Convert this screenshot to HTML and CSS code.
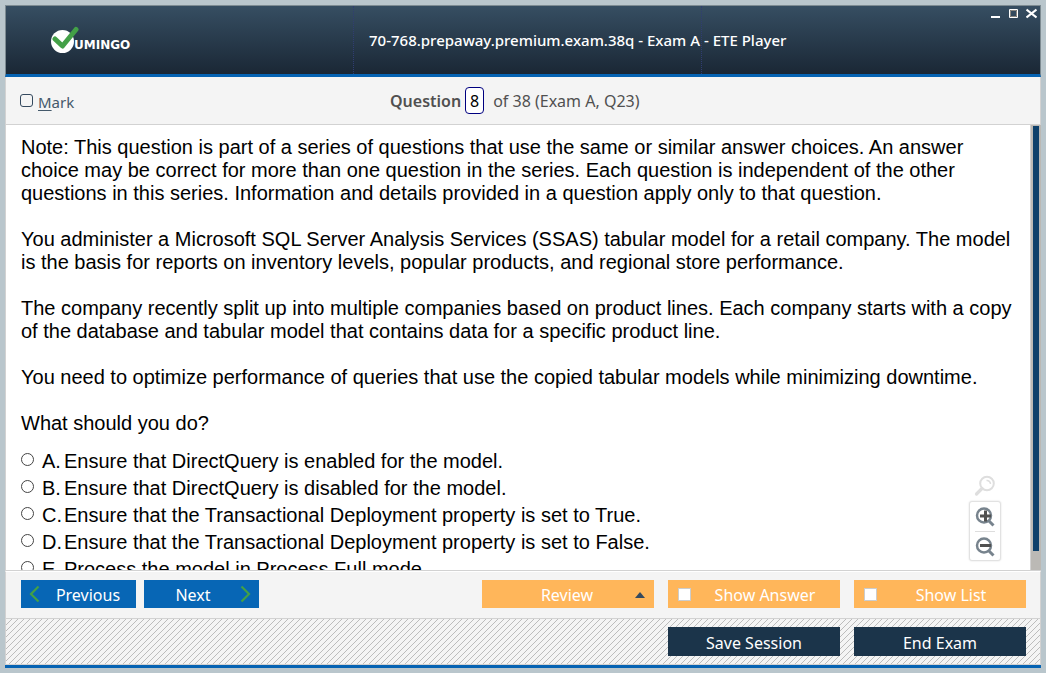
FILE: index.html
```html
<!DOCTYPE html>
<html lang="en">
<head>
<meta charset="utf-8">
<title>70-768.prepaway.premium.exam.38q - Exam A - ETE Player</title>
<link rel="stylesheet" href="styles.css">
</head>
<body>
<div class="window">
  <header class="titlebar">
    <div class="brand">
      <svg class="brand-mark" width="28" height="28" viewBox="0 0 28 28" aria-hidden="true">
        <circle cx="11.500" cy="15.500" r="11.500" fill="#fff"/>
        <path d="M4 13L11.500 20L25 3.500" fill="none" stroke="#43a047" stroke-width="5" stroke-linecap="round" stroke-linejoin="round"/>
      </svg>
      <span class="brand-name">UMINGO</span>
    </div>
    <h1 class="title">70-768.prepaway.premium.exam.38q - Exam A - ETE Player</h1>
    <div class="window-controls">
      <button type="button" class="control" aria-label="Minimize"><svg width="11" height="11" viewBox="0 0 11 11"><path d="M1 8h9v2H1z" fill="#fff"/></svg></button>
      <button type="button" class="control" aria-label="Maximize"><svg width="11" height="11" viewBox="0 0 11 11"><path d="M1.500 1.500h8v8h-8z" fill="none" stroke="#fff"/><path d="M2.500 2.500h6v6h-6z" fill="none" stroke="#8b8780"/></svg></button>
      <button type="button" class="control" aria-label="Close"><svg width="11" height="11" viewBox="0 0 11 11"><path d="M0.500 1.500L10.500 9.500M10.500 1.500L0.500 9.500" stroke="#fff" stroke-width="2.200"/></svg></button>
    </div>
  </header>

  <div class="infobar">
    <label class="mark"><input type="checkbox" class="mark-box"><span><u>M</u>ark</span></label>
    <div class="position">
      <label for="question-number" class="position-label">Question</label>
      <input id="question-number" class="position-input" type="text" value="8">
      <span>of 38 (Exam A, Q23)</span>
    </div>
  </div>

  <main class="content">
    <div class="question">
      <p>Note: This question is part of a series of questions that use the same or similar answer choices. An answer choice may be correct for more than one question in the series. Each question is independent of the other questions in this series. Information and details provided in a question apply only to that question.</p>
      <p>You administer a Microsoft SQL Server Analysis Services (SSAS) tabular model for a retail company. The model is the basis for reports on inventory levels, popular products, and regional store performance.</p>
      <p>The company recently split up into multiple companies based on product lines. Each company starts with a copy of the database and tabular model that contains data for a specific product line.</p>
      <p>You need to optimize performance of queries that use the copied tabular models while minimizing downtime.</p>
      <p>What should you do?</p>
      <div class="choices">
        <label class="choice"><input type="radio" name="answer"><span>A.</span><span>Ensure that DirectQuery is enabled for the model.</span></label>
        <label class="choice"><input type="radio" name="answer"><span>B.</span><span>Ensure that DirectQuery is disabled for the model.</span></label>
        <label class="choice"><input type="radio" name="answer"><span>C.</span><span>Ensure that the Transactional Deployment property is set to True.</span></label>
        <label class="choice"><input type="radio" name="answer"><span>D.</span><span>Ensure that the Transactional Deployment property is set to False.</span></label>
        <label class="choice"><input type="radio" name="answer"><span>E.</span><span>Process the model in Process Full mode.</span></label>
      </div>
    </div>
    <div class="scroll-track"><div class="scroll-thumb"></div></div>
    <div class="zoom">
      <svg width="22" height="22" viewBox="0 0 22 22" fill="none" stroke="#dedede" aria-hidden="true"><circle cx="13" cy="8.500" r="6.800" stroke-width="2"/><path d="M12.500 5.500a3.500 3.500 0 0 1 4 3.500" stroke-width="1.500"/><path d="M8 13.500L2.500 19" stroke-width="3.200" stroke-linecap="round"/></svg>
      <div class="zoom-panel">
        <button type="button" class="zoom-button" aria-label="Zoom in"><svg width="20" height="20" viewBox="0 0 20 20" fill="none"><circle cx="9" cy="8.500" r="7" stroke="#77838d" stroke-width="2.500"/><path d="M13.500 13.500L18.500 18.500" stroke="#77838d" stroke-width="3"/><path d="M5 9h11M10.500 3.500v11" stroke="#505050" stroke-width="3"/></svg></button>
        <button type="button" class="zoom-button" aria-label="Zoom out"><svg width="20" height="20" viewBox="0 0 20 20" fill="none"><circle cx="9" cy="8.500" r="7" stroke="#77838d" stroke-width="2.500"/><path d="M13.500 13.500L18.500 18.500" stroke="#77838d" stroke-width="3"/><path d="M5 8.500h11" stroke="#505050" stroke-width="3"/></svg></button>
      </div>
    </div>
  </main>

  <nav class="toolbar">
    <button type="button" class="button button-nav"><svg width="11" height="18" viewBox="0 0 11 18" fill="none" stroke="#43a047" stroke-width="2.200"><path d="M9.500 1.500L2 9l7.500 7.500"/></svg><span class="label-previous">Previous</span></button>
    <button type="button" class="button button-nav"><span class="label-next">Next</span><svg width="11" height="18" viewBox="0 0 11 18" fill="none" stroke="#43a047" stroke-width="2.200"><path d="M1.500 1.500L9 9l-7.500 7.500"/></svg></button>
    <div class="toolbar-options">
      <button type="button" class="button button-option"><span>Review</span><svg class="arrow" width="10" height="6" viewBox="0 0 10 6"><path d="M5 0l5 6H0z" fill="#34495e"/></svg></button>
      <label class="button button-option"><input type="checkbox" class="option-box"><span>Show Answer</span></label>
      <label class="button button-option"><input type="checkbox" class="option-box"><span>Show List</span></label>
    </div>
  </nav>

  <footer class="footer">
    <button type="button" class="button button-dark">Save Session</button>
    <button type="button" class="button button-dark">End Exam</button>
  </footer>
</div>
</body>
</html>
```
FILE: styles.css
```css
* {
  box-sizing: border-box;
}

body {
  margin: 0;
  height: 100vh;
  padding: 5px;
  background: #b9c6cc;
  color: #505050;
  font-family: "Noto Sans", "Open Sans", sans-serif;
  font-size: 16px;
}

button,
input {
  margin: 0;
  font: inherit;
}

.window {
  display: flex;
  flex-direction: column;
  height: 100%;
  border-bottom: 3px solid #0563b3;
  background: #f4f4f4;
}

.titlebar,
.infobar {
  display: grid;
  grid-template-columns: minmax(0, 348fr) minmax(0, 348fr) minmax(0, 338fr);
  flex: none;
}

.titlebar {
  height: 72px;
  border: 1px solid #7d8b92;
  border-bottom: 3px solid #0563b3;
  background: linear-gradient(#364e62, #1a2735);
}

.brand {
  display: flex;
  align-items: center;
  padding-left: 45px;
  border-right: 1px dotted #303d72;
}

.brand-name {
  margin-left: -5px;
  padding-top: 10px;
  color: #fff;
  font: bold 12px "DejaVu Sans", sans-serif;
}

.title {
  display: flex;
  align-items: center;
  margin: 0;
  padding-left: 15px;
  border-right: 1px dotted #303d72;
  color: #fff;
  font-size: 15px;
  font-weight: 500;
  white-space: nowrap;
}

.window-controls {
  display: flex;
  justify-content: flex-end;
  align-items: flex-start;
  gap: 7px;
  padding: 2px 3px;
}

.control {
  display: flex;
  padding: 0;
  border: 0;
  background: none;
}

.infobar {
  align-items: center;
  height: 48px;
  border: 1px solid #d2d2d2;
  border-top: 0;
}

.mark {
  display: flex;
  align-items: center;
  gap: 5px;
  padding-left: 14px;
  color: #44596b;
}

.mark span {
  padding-top: 2px;
  font-size: 15px;
}

.mark-box {
  appearance: none;
  width: 13px;
  height: 13px;
  border: 1px solid #34495e;
  border-radius: 3px;
}

.mark u {
  text-underline-offset: 2px;
}

.position {
  display: flex;
  align-items: center;
  padding-left: 36px;
  white-space: nowrap;
}

.position-label {
  font-weight: 600;
}

.position-input {
  width: 19px;
  height: 27px;
  margin: 0 9px 0 4px;
  padding: 0;
  border: 1px solid #000080;
  border-radius: 4px;
  background: #fff;
  color: #000;
  text-align: center;
}

.content {
  position: relative;
  display: flex;
  flex: 1;
  min-height: 0;
  border-bottom: 1px solid #d2d2d2;
  border-left: 1px solid #d2d2d2;
  background: #fff;
}

.question {
  flex: 1;
  overflow: hidden;
  padding: 11px 10px 0 15px;
  color: #000;
  font: 20px/23px "Liberation Sans", Arial, sans-serif;
}

.question p {
  margin: 0 0 23px;
}

.choices {
  margin-top: -10px;
}

.choice {
  display: grid;
  grid-template-columns: 21px 22px 1fr;
  align-items: center;
  height: 27px;
}

.choice input {
  appearance: none;
  width: 13px;
  height: 13px;
  margin-bottom: 4px;
  border: 1px solid #444;
  border-radius: 50%;
}

.scroll-track {
  width: 11px;
  padding: 1px 2px;
  border-left: 1px solid #d2d2d2;
  background: #bbb9b5;
}

.scroll-thumb {
  height: 96%;
  background: #0d406b;
}

.zoom {
  position: absolute;
  right: 40px;
  bottom: 9px;
  display: flex;
  flex-direction: column;
  align-items: center;
  gap: 4px;
}

.zoom-panel {
  border: 1px solid #e2e2e2;
  border-radius: 3px;
  background: #fff;
  box-shadow: 0 0 2px #ddd;
}

.zoom-button {
  display: flex;
  height: 29px;
  margin: 0 5px;
  padding: 5px 0 4px;
  border: 0;
  background: none;
}

.zoom-button + .zoom-button {
  border-top: 1px solid #ddd;
}

.toolbar {
  display: flex;
  gap: 8px;
  height: 48px;
  flex: none;
  padding: 8px 14px 0 15px;
  border: 1px solid #d2d2d2;
  border-top-color: #fff;
}

.toolbar-options {
  display: flex;
  gap: 14px;
  margin-left: auto;
}

.button {
  display: flex;
  align-items: center;
  justify-content: center;
  height: 28px;
  padding: 2px 0 0;
  border: 0;
  color: #fff;
  white-space: nowrap;
}

.button-nav {
  width: 115px;
  padding: 0 8px;
  background: #0766b5;
}

.button-nav span {
  flex: 1;
  padding-top: 2px;
}

.label-previous {
  padding-left: 8px;
  text-align: center;
}

.label-next {
  padding-right: 6px;
  text-align: center;
}

.button-nav .label-next {
  padding-left: 0;
}

.button-option {
  width: 172px;
  padding: 2px 9px 0;
  background: #ffb65a;
}

.button-option span {
  flex: 1;
  padding-left: 8px;
  text-align: center;
}

.arrow {
  flex: none;
}

.option-box {
  appearance: none;
  width: 13px;
  height: 13px;
  margin: 0 0 1px 1px;
  border: 1px solid #ccc;
  background: #fff;
}

.footer {
  display: flex;
  justify-content: flex-end;
  gap: 14px;
  height: 46px;
  flex: none;
  padding: 8px 14px 0;
  border: 1px solid #d2d2d2;
  border-top: 0;
  background: linear-gradient(135deg, #f4f4f4 43%, #bcbcbc 43% 57%, #f4f4f4 57%) 0 0 / 6px 6px;
}

.button-dark {
  width: 172px;
  height: 29px;
  background: #1b344a;
}
```
